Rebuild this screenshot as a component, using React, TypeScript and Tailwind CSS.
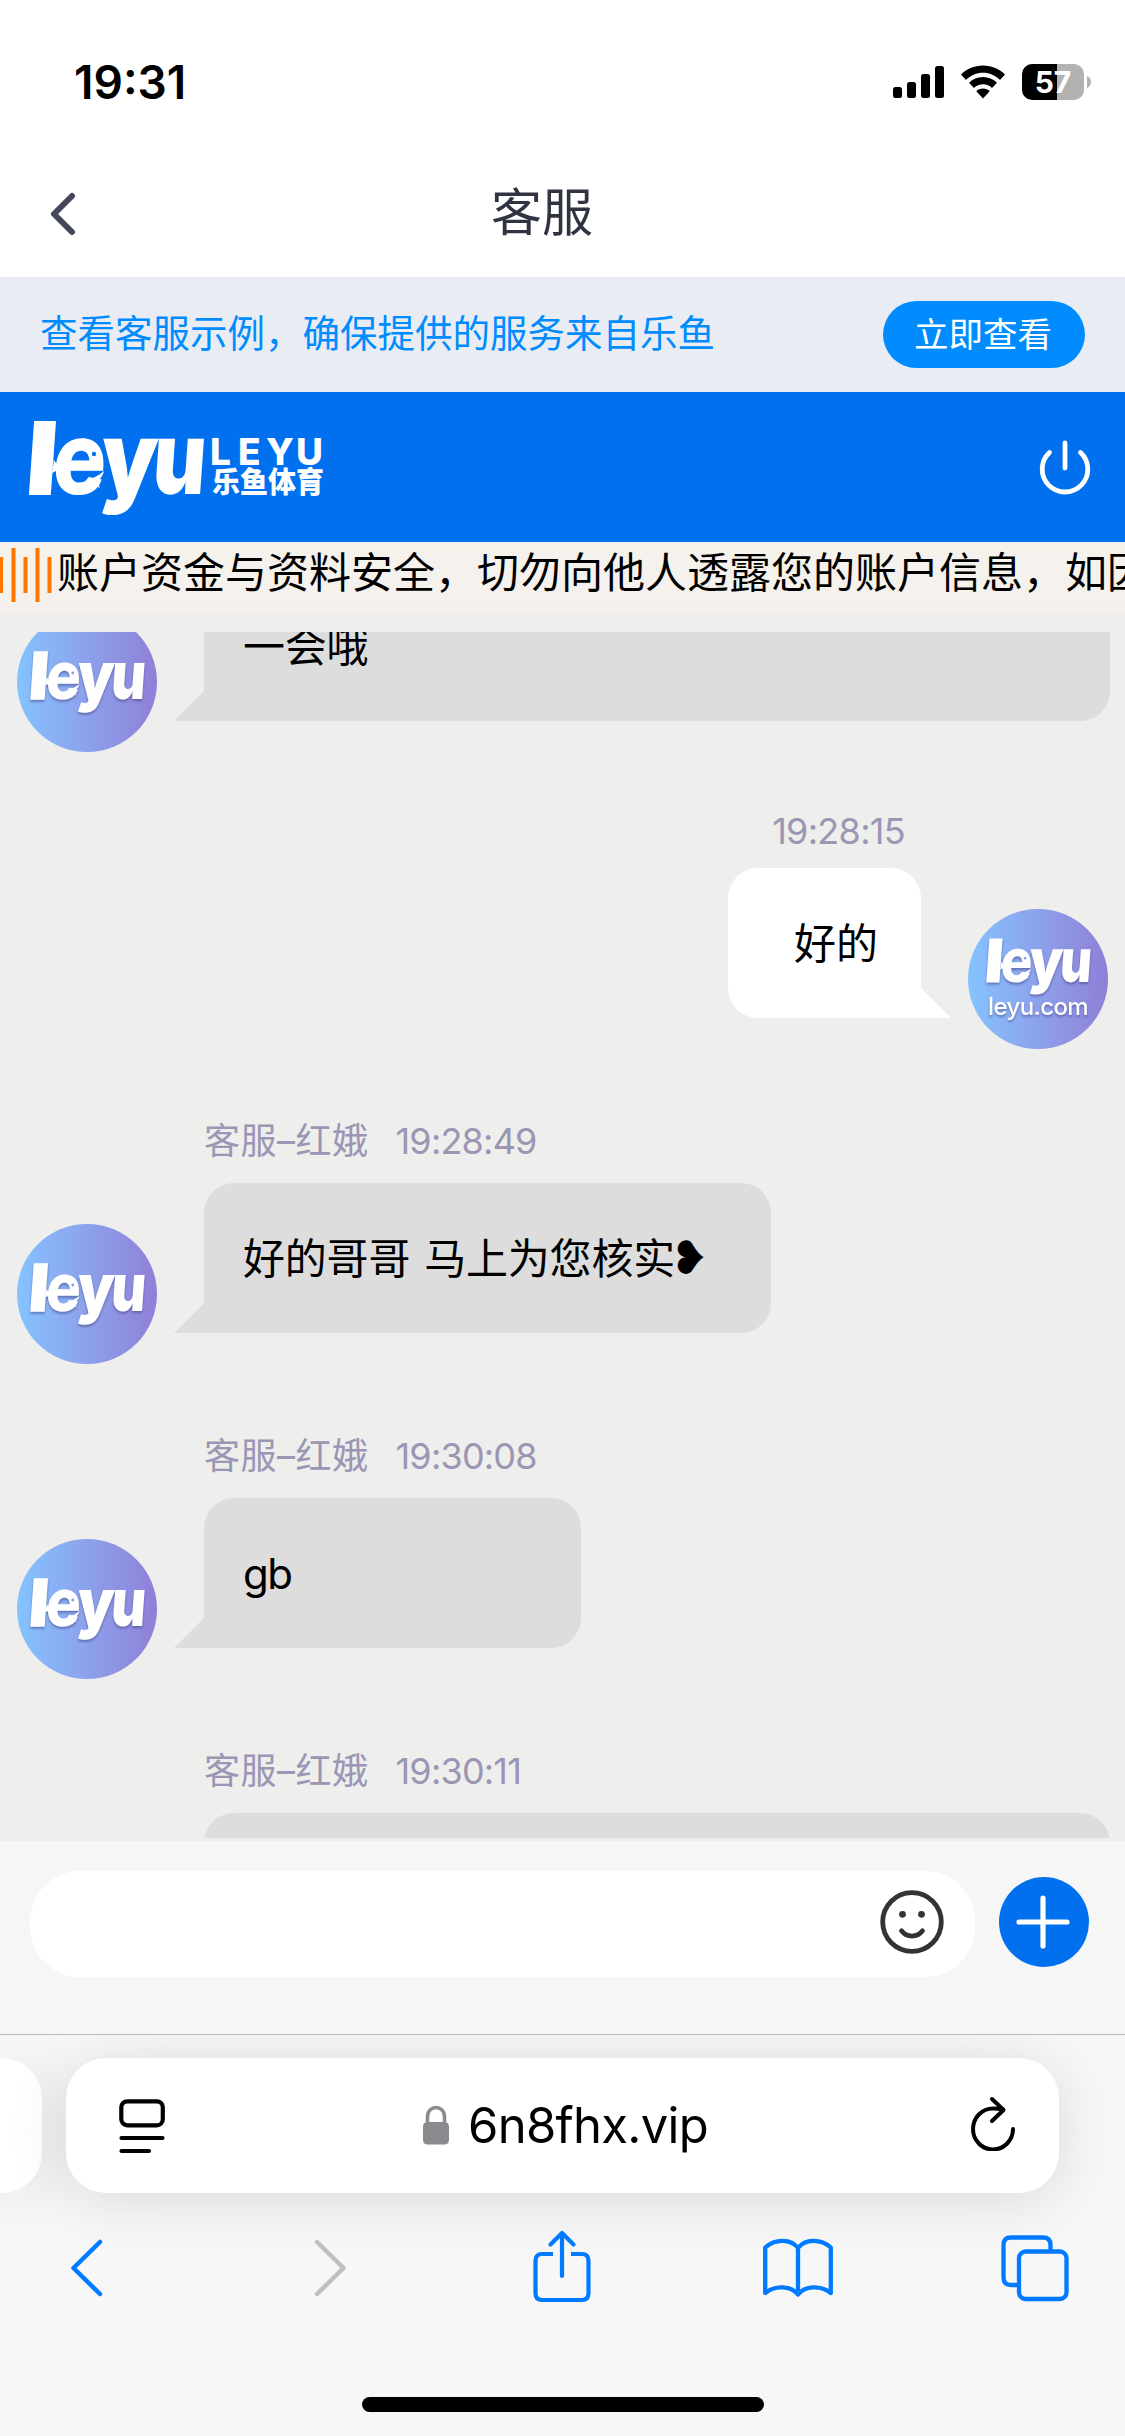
import { type FC, type ReactNode } from "react";
import clsx from "clsx";

type Message = {
  from: "agent" | "user";
  name?: string;
  time: string;
  content: ReactNode;
  width: string;
  gap?: string;
};

const MESSAGES: Message[] = [
  { from: "agent", name: "客服–红娥", time: "19:28:05", content: "一会哦", width: "w-[906px]", gap: "mb-[87px]" },
  { from: "user", time: "19:28:15", content: "好的", width: "w-[193px]" },
  {
    from: "agent",
    name: "客服–红娥",
    time: "19:28:49",
    content: (
      <>
        好的哥哥<span className="ml-[14px]">马上为您核实</span>
        <span className="-ml-[5px] font-['DejaVu_Sans'] text-[46px]">❥</span>
      </>
    ),
    width: "w-[567px]",
  },
  {
    from: "agent",
    name: "客服–红娥",
    time: "19:30:08",
    content: <span className="tracking-[-1.5px]">gb</span>,
    width: "w-[377px]",
  },
  { from: "agent", name: "客服–红娥", time: "19:30:11", content: "", width: "w-[906px]" },
];

// 로고 워드마크 (e 안에 물고기 모양)
const LeyuMark: FC<{ className?: string; eye: string }> = ({ className, eye }) => (
  <svg viewBox="0 0 173 96" className={className} fill="#fff" fontFamily="Inter, sans-serif" fontWeight="900" fontSize="101">
    <g transform="translate(0 75) skewX(-4)">
      <text transform="translate(-5 0) scale(1 .98)" stroke="#fff" strokeWidth="2">l</text>
      <text transform="translate(21 0) scale(.88 1)" fontWeight="800">e</text>
      <text transform="translate(69 0) scale(.88 1)">y</text>
      <text transform="translate(121 0) scale(.81 1)">u</text>
    </g>
    <path d="M24 41L22 54L30 50zM74 52C68 57 62 60 56 61L70 69L67 62C71 60 73 56 74 52z" />
    <circle cx="64" cy="35" r="2.200" fill={eye} />
  </svg>
);

const Avatar: FC<{ user?: boolean }> = ({ user }) => (
  <div className="w-[140px] h-[140px] -mb-[31px] shrink-0 rounded-full bg-linear-to-r from-[#84c3ff] to-[#8f7fd8] flex flex-col items-center">
    <div className="flex flex-col items-center drop-shadow-[0_2px_1px_rgba(60,60,120,0.5)]">
      {user ? (
        <>
          <LeyuMark className="w-[103px] h-[58px] mt-[28px] overflow-visible" eye="#8a9ce8" />
          <span className="text-white text-[24px] leading-[24px] tracking-[-0.6px] font-medium">leyu.com</span>
        </>
      ) : (
        <LeyuMark className="w-[113px] h-[63px] mt-[38px] overflow-visible" eye="#8a9ce8" />
      )}
    </div>
  </div>
);

const ChatMessage: FC<{ message: Message }> = ({ message }) => {
  const { from, name, time, content, width, gap } = message;

  if (from === "user") {
    return (
      <div className={clsx("shrink-0 pr-[17px]", gap ?? "mb-[105px]")}>
        <div className="h-[60px] pt-[5px] pr-[203px] text-right text-[36px] leading-[36px] tracking-[-0.7px] text-[#9b96b4]">
          {time}
        </div>
        <div className="h-[150px] flex justify-end items-end">
          <div className={clsx("h-[150px] pl-[66px] rounded-[30px] rounded-br-none bg-white flex items-center text-[42px]", width)}>
            {content}
          </div>
          <svg className="w-[30px] h-[30px] mr-[17px]" viewBox="0 0 30 30" fill="#fff">
            <path d="M0 0L30 30H0z" />
          </svg>
          <Avatar user />
        </div>
      </div>
    );
  }

  return (
    <div className={clsx("shrink-0 pl-[17px]", gap ?? "mb-[105px]")}>
      <div className="h-[60px] pl-[187px] flex gap-[27px] text-[36px] leading-[36px] text-[#9b96b4]">
        <span className="tracking-[0.5px]">{name}</span>
        <span className="tracking-[-0.8px]">{time}</span>
      </div>
      <div className="h-[150px] flex items-end">
        <Avatar />
        <svg className="w-[30px] h-[30px] ml-[17px]" viewBox="0 0 30 30" fill="#ddd">
          <path d="M30 0L0 30H30z" />
        </svg>
        <div className={clsx("h-[150px] pl-[39px] rounded-[30px] rounded-bl-none bg-[#ddd] flex items-center text-[42px] tracking-[-0.2px] whitespace-nowrap", width)}>
          {content}
        </div>
      </div>
    </div>
  );
};

const StatusBar: FC = () => (
  <div className="h-[136px] pl-[74px] pr-[34px] pt-[28px] flex items-center justify-between">
    <span className="text-[46px] font-semibold leading-none">19:31</span>
    <div className="flex items-center">
      <svg className="w-[51px] h-[32px]" viewBox="0 0 51 32">
        <rect x="0" y="21" width="9" height="11" rx="2.5" />
        <rect x="14" y="16" width="9" height="16" rx="2.5" />
        <rect x="28" y="8" width="9" height="24" rx="2.5" />
        <rect x="42" y="0" width="9" height="32" rx="2.5" />
      </svg>
      <svg className="w-[46px] h-[34px] ml-[16px]" viewBox="0 0 46 34">
        <path d="M23 0.5C32 0.5 39.500 4 45 9.500L40 15C35.500 10.500 29.500 7.800 23 7.800S10.500 10.500 6 15L1 9.500C6.500 4 14 0.500 23 0.500Z" />
        <path d="M23 12c5.500 0 10.300 2.200 14 5.800l-5 5.200c-2.400-2.400-5.500-3.700-9-3.700s-6.600 1.300-9 3.700l-5-5.200c3.700-3.600 8.500-5.800 14-5.800Z" />
        <path d="M23 23.500c2.700 0 5 1 6.700 2.700L23 33.500l-6.700-7.300c1.700-1.700 4-2.700 6.700-2.700Z" />
      </svg>
      <div className="w-[62px] h-[36px] ml-[16px] rounded-[10px] bg-linear-to-r from-black from-57% to-[#b2b2b2] to-57% flex items-center justify-center text-white text-[30px] font-bold leading-none">
        57
      </div>
      <svg className="w-[4px] h-[12px] ml-[3px]" viewBox="0 0 4 12" fill="#b2b2b2">
        <path d="M0 0c2.500 1 4 3.300 4 6s-1.500 5-4 6z" />
      </svg>
    </div>
  </div>
);

const NoticeBar: FC = () => (
  <div className="h-[72px] flex items-start bg-linear-to-b from-[#f5f2ec] to-[#f5f0ed] overflow-hidden">
    <svg className="w-[57px] h-[72px] shrink-0" viewBox="0 0 57 72" stroke="#ff7500" strokeWidth="4">
      <path d="M1 15V51M13.500 6V60M25.500 15V51M37.500 6V60M49.500 15V51" />
    </svg>
    <p className="text-[42px] leading-[61px] whitespace-nowrap">
      账户资金与资料安全，切勿向他人透露您的账户信息，如因
    </p>
  </div>
);

const ChatInput: FC = () => (
  <div className="h-[193px] pt-[30px] pl-[30px] bg-[#f6f6f6] flex items-start">
    <div className="w-[945px] h-[106px] rounded-[50px] bg-white flex items-start justify-end pt-[19px] pr-[31px]">
      <svg className="w-[64px] h-[64px]" viewBox="0 0 64 64" fill="none" stroke="#333" strokeWidth="4.800" strokeLinecap="round">
        <circle cx="32" cy="32" r="29.300" />
        <circle cx="22.500" cy="24.300" r="3.400" fill="#333" stroke="none" />
        <circle cx="41.500" cy="24.300" r="3.400" fill="#333" stroke="none" />
        <path d="M21.500 40.800c5.500 7 15.500 7 21 0" />
      </svg>
    </div>
    <svg className="w-[90px] h-[90px] ml-[24px] mt-[6px]" viewBox="0 0 90 90">
      <circle cx="45" cy="45" r="45" fill="#0070ef" />
      <path d="M20 45H68M44 21V69" stroke="#fff" strokeWidth="5.200" strokeLinecap="round" />
    </svg>
  </div>
);

// 하단 브라우저 영역
const BrowserBar: FC = () => (
  <div className="h-[402px] border-t border-[#b5babf] bg-[#f7f7f7] overflow-hidden">
    <div className="pt-[23px] flex">
      <div className="w-[42px] h-[135px] rounded-r-[40px] bg-white shadow-[0_6px_60px_rgba(0,0,0,0.1)]" />
      <div className="w-[993px] h-[135px] ml-[24px] pl-[52px] pr-[42px] rounded-[40px] bg-white shadow-[0_6px_60px_rgba(0,0,0,0.12)] flex items-center justify-between">
        <svg className="w-[48px] h-[56px]" viewBox="0 0 48 56" fill="none" stroke="#000" strokeWidth="4.200" strokeLinecap="round">
          <rect x="3.300" y="3.300" width="41.500" height="24" rx="6" />
          <path d="M3.500 40H44.500M3.500 53H31" />
        </svg>
        <div className="flex items-center mr-[5px]">
          <svg className="w-[28px] h-[40px] mr-[18px] -mt-[2px]" viewBox="0 0 28 40">
            <rect x="1" y="17" width="26" height="22.500" rx="4.500" fill="#8a8a8f" />
            <path d="M5.500 19V11a8.500 8.500 0 0 1 17 0V19" fill="none" stroke="#8a8a8f" strokeWidth="3.600" />
          </svg>
          <span className="text-[49px] leading-none tracking-[-0.7px]">6n8fhx.vip</span>
        </div>
        <svg className="w-[48px] h-[56px] -mt-[6px]" viewBox="0 0 48 56" fill="none" stroke="#000" strokeWidth="4" strokeLinecap="round" strokeLinejoin="round">
          <path d="M44 34a20 20.500 0 1 1-20-20.500q5 0 10 1" />
          <path d="M23 4L34.500 15L23 26" />
        </svg>
      </div>
    </div>
    <div className="h-[74px] mt-[38px] pl-[70px] flex items-center">
      <svg className="w-[34px] h-[58px]" viewBox="0 0 34 58" fill="none" stroke="#007aff" strokeWidth="4.500" strokeLinecap="round" strokeLinejoin="round">
        <path d="M30 3L3.500 29L30 55" />
      </svg>
      <svg className="w-[34px] h-[58px] ml-[209px]" viewBox="0 0 34 58" fill="none" stroke="#bfbfbf" strokeWidth="4.500" strokeLinecap="round" strokeLinejoin="round">
        <path d="M4 3L30.500 29L4 55" />
      </svg>
      <svg className="w-[60px] h-[74px] ml-[185px] -mt-[4px]" viewBox="0 0 60 74" fill="none" stroke="#007aff" strokeWidth="4.200" strokeLinecap="round" strokeLinejoin="round">
        <path d="M21 25H10Q3.500 25 3.500 32V64Q3.500 71 10 71H50Q56.500 71 56.500 64V32Q56.500 25 50 25H39" strokeLinecap="butt" />
        <path d="M30 47V4M18.500 15.500L30 4L41.500 15.500" />
      </svg>
      <svg className="w-[72px] h-[62px] ml-[170px]" viewBox="0 0 72 62" fill="none" stroke="#007aff" strokeWidth="4.300" strokeLinecap="round" strokeLinejoin="round">
        <path d="M36 11V57.500M36 11C29 1.500 13 1.500 3.200 10.500V56C13 48 29 48.500 36 57.500C43 48.500 59 48 68.800 56V10.500C59 1.500 43 1.500 36 11" />
      </svg>
      <svg className="w-[70px] h-[68px] ml-[166px]" viewBox="0 0 70 68" fill="none" stroke="#007aff" strokeWidth="4.300">
        <path d="M17 51H11Q3.500 51 3.500 43.500V11Q3.500 3.500 11 3.500H43Q50.500 3.500 50.500 11V17" />
        <rect x="19" y="17.500" width="47.500" height="47.500" rx="6.500" />
      </svg>
    </div>
    <div className="w-[402px] h-[15px] mx-auto mt-[92px] rounded-full bg-black" />
  </div>
);

const App: FC = () => {
  return (
    <div className="w-[1125px] h-[2436px] bg-white text-black font-[Inter,'Noto_Sans_CJK_SC',sans-serif] flex flex-col overflow-hidden">
      <StatusBar />

      <div className="h-[141px] pl-[49px] flex items-center">
        <svg className="w-[28px] h-[44px] mt-[14px]" viewBox="0 0 28 44" fill="none" stroke="#434759" strokeWidth="6" strokeLinecap="round" strokeLinejoin="round">
          <path d="M23 4L5 22L23 40" />
        </svg>
        <h1 className="ml-[414px] mt-[12px] text-[51px] leading-none text-[#303442]">客服</h1>
      </div>

      {/* 안내 배너 */}
      <div className="h-[115px] pl-[40px] pr-[40px] bg-[#e9edf3] flex items-center justify-between">
        <span className="-mt-[2px] text-[37.5px] leading-[56px] text-[#008cff]">查看客服示例，确保提供的服务来自乐鱼</span>
        <button className="w-[202px] h-[67px] pr-[2px] rounded-full bg-[#008cff] text-white text-[34.5px] leading-[52px]">
          立即查看
        </button>
      </div>

      <header className="h-[150px] pl-[30px] pr-[34px] bg-[#0070ef] flex items-center justify-between">
        <div className="flex items-start">
          <LeyuMark className="w-[173px] h-[96px] overflow-visible" eye="#0070ef" />
          <svg className="w-[116px] h-[96px] ml-[8px]" viewBox="0 0 116 96" fill="#fff" fontFamily="Inter, 'Noto Sans CJK SC', sans-serif">
            <text x="-1 27 55 85" y="46" fontSize="37" fontWeight="800">LEYU</text>
            <text x="1" y="74" fontSize="29" fontWeight="900" textLength="112" lengthAdjust="spacingAndGlyphs">乐鱼体育</text>
          </svg>
        </div>
        <svg className="w-[52px] h-[58px]" viewBox="0 0 52 58" fill="none" stroke="#fff" strokeWidth="4.800" strokeLinecap="round">
          <path d="M26 5V30M10.500 14.500a22.800 22.800 0 1 0 31 0" />
        </svg>
      </header>

      <NoticeBar />

      <div className="h-[1227px] pt-[18px] pb-[3px] bg-[#eeeeec]">
        <div className="h-[1206px] flex flex-col overflow-hidden">
          <div className="-mt-[121px] shrink-0">
            {MESSAGES.map((message) => (
              <ChatMessage key={message.time} message={message} />
            ))}
          </div>
        </div>
      </div>

      <ChatInput />
      <BrowserBar />
    </div>
  );
};

export default App;
